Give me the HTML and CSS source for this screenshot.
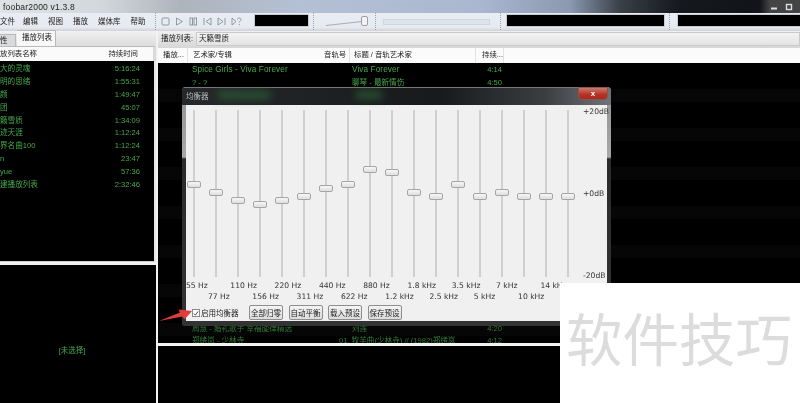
FILE: index.html
```html
<!DOCTYPE html>
<html lang="zh">
<head>
    <meta charset="UTF-8">
    <title>foobar2000 v1.3.8</title>
    <link rel="stylesheet" href="styles.css">
</head>
<body>
<div class="app">
    <div class="titlebar">
        <span>foobar2000 v1.3.8</span>
        <div class="caption-btns">
            <svg width="8" height="8" viewBox="0 0 8 8"><path d="M1 5.5h6" stroke="#ddd" stroke-width="2"/></svg>
            <svg width="8" height="8" viewBox="0 0 8 8"><rect x="1.5" y="1.5" width="5" height="5" fill="none" stroke="#ddd" stroke-width="1.4"/></svg>
        </div>
    </div>

    <div class="toolbar">
        <nav class="menu">
            <span>文件</span>
            <span>编辑</span>
            <span>视图</span>
            <span>播放</span>
            <span>媒体库</span>
            <span>帮助</span>
        </nav>
        <div class="grip"></div>
        <div class="transport">
            <svg width="9" height="9" viewBox="0 0 9 9"><rect x="1" y="1" width="7" height="7" rx="1"/></svg>
            <svg width="9" height="9" viewBox="0 0 9 9"><path d="M1.5 1l6 3.5-6 3.5z"/></svg>
            <svg width="9" height="9" viewBox="0 0 9 9"><rect x="1" y="1" width="2.6" height="7"/><rect x="5" y="1" width="2.6" height="7"/></svg>
            <svg width="9" height="9" viewBox="0 0 9 9"><path d="M1 1v7M8 1L3 4.5 8 8z"/></svg>
            <svg width="9" height="9" viewBox="0 0 9 9"><path d="M8 1v7M1 1l5 3.5L1 8z"/></svg>
            <svg width="11" height="9" viewBox="0 0 11 9"><path d="M1 1l4 3.5L1 8zM6.5 2.5c0-2 3.5-2 3.5 0 0 1.5-1.7 1.5-1.7 3M8.3 7v1.2"/></svg>
        </div>
        <div class="screen screen-time"></div>
        <div class="grip"></div>
        <div class="volume">
            <svg width="46" height="10" viewBox="0 0 46 10"><path d="M0 8.5L36 4.5" stroke="#a9adb3" fill="none"/></svg>
            <i class="volume-knob"></i>
        </div>
        <div class="grip"></div>
        <div class="seek"></div>
        <div class="grip"></div>
        <div class="screen screen-track"></div>
        <div class="grip"></div>
        <div class="screen screen-last"></div>
    </div>

    <div class="workspace">
        <aside class="side">
            <div class="tabs">
                <span class="tab">性</span>
                <span class="tab tab-active">播放列表</span>
            </div>
            <div class="side-head">
                <span>放列表名称</span>
                <span>持续时间</span>
            </div>
            <ul class="playlists">
                <li><span>大的灵魂</span><span>5:16:24</span></li>
                <li><span>明的思绪</span><span>1:55:31</span></li>
                <li><span>颜</span><span>1:49:47</span></li>
                <li><span>团</span><span>45:07</span></li>
                <li><span>籁雪质</span><span>1:34:09</span></li>
                <li><span>迹天涯</span><span>1:12:24</span></li>
                <li><span>界名曲100</span><span>1:12:24</span></li>
                <li><span>n</span><span>23:47</span></li>
                <li><span>yue</span><span>57:36</span></li>
                <li><span>建播放列表</span><span>2:32:46</span></li>
            </ul>
            <div class="now-playing">[未选择]</div>
        </aside>

        <main class="content">
            <div class="playlist-bar">
                <span>播放列表:</span>
                <div class="combo">天籁雪质</div>
            </div>
            <div class="columns">
                <span class="col-state">播放...</span>
                <span class="col-artist">艺术家/专辑</span>
                <span class="col-no">音轨号</span>
                <span class="col-title">标题 / 音轨艺术家</span>
                <span class="col-len">持续...</span>
            </div>
            <div class="tracks">
                <div class="track track-latin"><span class="t-artist">Spice Girls - Viva Forever</span><span class="t-title">Viva Forever</span><span class="t-len">4:14</span></div>
                <div class="track"><span class="t-artist">? - ?</span><span class="t-title">聊琴 - 最新情伤</span><span class="t-len">4:50</span></div>
                <div class="track track-low"><span class="t-artist">周慧 - 婚礼歌手 幸福旋律精选</span><span class="t-title">刘莲</span><span class="t-len">4:20</span></div>
                <div class="track track-last"><span class="t-artist">郑绪岚 - 少林寺</span><span class="t-title t-title-wide">01. 牧羊曲(少林寺) // (1982)郑绪岚</span><span class="t-len">4:12</span></div>
            </div>
            <div class="bottom-panel"></div>
        </main>
    </div>

    <!-- equalizer window -->
    <section class="eq-window">
        <header class="eq-title">
            <span>均衡器</span>
            <i class="glass glass-a"></i>
            <i class="glass glass-b"></i>
            <button class="close">x</button>
        </header>
        <div class="eq-body">
            <div class="eq-sliders">
                <div class="band"><i style="top:71px"></i></div>
                <div class="band"><i style="top:79px"></i></div>
                <div class="band"><i style="top:87px"></i></div>
                <div class="band"><i style="top:91px"></i></div>
                <div class="band"><i style="top:87px"></i></div>
                <div class="band"><i style="top:83px"></i></div>
                <div class="band"><i style="top:75px"></i></div>
                <div class="band"><i style="top:71px"></i></div>
                <div class="band"><i style="top:56px"></i></div>
                <div class="band"><i style="top:59px"></i></div>
                <div class="band"><i style="top:79px"></i></div>
                <div class="band"><i style="top:83px"></i></div>
                <div class="band"><i style="top:71px"></i></div>
                <div class="band"><i style="top:83px"></i></div>
                <div class="band"><i style="top:79px"></i></div>
                <div class="band"><i style="top:83px"></i></div>
                <div class="band"><i style="top:83px"></i></div>
                <div class="band"><i style="top:83px"></i></div>
                <div class="scale"><span>+20dB</span><span>+0dB</span><span>-20dB</span></div>
            </div>
            <div class="freqs">
                <span>55 Hz</span><span>110 Hz</span><span>220 Hz</span><span>440 Hz</span><span>880 Hz</span><span>1.8 kHz</span><span>3.5 kHz</span><span>7 kHz</span><span>14 kHz</span>
            </div>
            <div class="freqs freqs-low">
                <span>77 Hz</span><span>156 Hz</span><span>311 Hz</span><span>622 Hz</span><span>1.2 kHz</span><span>2.5 kHz</span><span>5 kHz</span><span>10 kHz</span>
            </div>
            <div class="eq-actions">
                <label class="check"><i class="box"><svg width="7" height="7" viewBox="0 0 7 7"><path d="M1 3.5l1.8 2L6 1" fill="none" stroke="#445" stroke-width="1.1"/></svg></i>启用均衡器</label>
                <button class="btn">全部归零</button>
                <button class="btn">自动平衡</button>
                <button class="btn">载入预设</button>
                <button class="btn">保存预设</button>
            </div>
        </div>
    </section>

    <svg class="arrow" width="36" height="16" viewBox="0 0 36 16"><path d="M0 13L21 4.5 19.5 1.5 33 3 25.5 11.5 23.5 8.5z" fill="#e23c3c"/></svg>

    <div class="watermark">软件技巧</div>
</div>
</body>
</html>
```

FILE: styles.css
```css
* {
    box-sizing: border-box;
}

body {
    margin: 0;
    background: #000;
    font-family: "Liberation Sans", "Noto Sans CJK SC", sans-serif;
    font-size: 8px;
    color: #222;
}

/* the shot is a soft, rescaled jpeg */
.app {
    position: relative;
    width: 800px;
    height: 403px;
    overflow: hidden;
    filter: blur(0.3px);
}

/* title bar */
.titlebar {
    height: 13px;
    display: flex;
    align-items: center;
    justify-content: space-between;
    padding-left: 3px;
    font-size: 8.5px;
    letter-spacing: 0.2px;
    color: #222;
    background: linear-gradient(90deg, #dfe3e6 0, #d3d8dc 100px, #aeb4bc 180px, #b4c0d4 300px, #a9b8d0 480px, #8a99b0 570px, #3a4048 620px, #15181c 680px, #11151a 760px, #444 770px);
}

.caption-btns {
    display: flex;
    gap: 7px;
    padding-right: 7px;
}

/* toolbar */
.toolbar {
    height: 18px;
    display: flex;
    align-items: flex-start;
    background: linear-gradient(#e9edf3, #e6eaf1 80%, #cfd2d6);
}

.menu {
    width: 154px;
    display: flex;
    gap: 10px;
    padding-top: 3px;
    font-size: 7.5px;
    line-height: 11px;
}

.menu span:first-child {
    margin-right: -2px;
}

.grip {
    width: 2px;
    height: 17px;
    margin: 0 1px;
    border-left: 1px dotted #9aa3b2;
}

.transport {
    width: 89px;
    display: flex;
    gap: 5px;
    padding: 4px 0 0 3px;
}

.transport svg {
    fill: none;
    stroke: #80858c;
    stroke-width: 0.8;
}

.screen {
    height: 13px;
    margin-top: 1px;
    background: #000;
    border: 1px solid #c8ccd2;
}

.screen-time {
    width: 55px;
    margin-left: 7px;
    margin-right: 3px;
}

.screen-track {
    width: 159px;
    margin: 1px 3px;
}

.screen-last {
    flex: 1;
    margin-left: 5px;
    border-right: 0;
}

.volume {
    position: relative;
    width: 58px;
    padding: 4px 0 0 10px;
}

.volume-knob {
    position: absolute;
    left: 45px;
    top: 3px;
    width: 7px;
    height: 10px;
    border: 1px solid #9a9ea4;
    border-radius: 2px;
    background: #f3f4f6;
}

.seek {
    width: 107px;
    height: 6px;
    margin: 6px 9px 0 5px;
    background: #dfe4ec;
    border: 1px solid #cfd6e0;
}

/* panes */
.workspace {
    height: 372px;
    display: grid;
    grid-template-columns: 156px 1fr;
    column-gap: 2px;
    background: #f2f2f2;
}

.side {
    display: flex;
    flex-direction: column;
    min-width: 0;
}

.tabs {
    height: 15px;
    display: flex;
    align-items: flex-end;
    gap: 1px;
    background: linear-gradient(#f1f1f1, #dcdcdc);
    font-size: 7.5px;
}

.tab {
    width: 16px;
    height: 12px;
    line-height: 12px;
    background: #d9dadc;
    border: 1px solid #b9b9b9;
    border-left: 0;
    border-bottom: 0;
}

.tab-active {
    width: 39px;
    height: 16px;
    padding-left: 5px;
    line-height: 13px;
    background: #f7f7f7;
}

.side-head {
    height: 15px;
    display: flex;
    justify-content: space-between;
    padding-right: 15px;
    line-height: 13px;
    font-size: 7.4px;
    background: #fafafa;
    border-top: 1px solid #bbb;
    border-right: 3px solid #d8d8d8;
}

.playlists {
    height: 201px;
    margin: 0;
    padding: 2px 0 0;
    list-style: none;
    background: #000;
    color: #46a84c;
    border-right: 2px solid #e8e8e8;
    border-bottom: 1px solid #ccc;
}

.playlists li {
    height: 12.9px;
    display: flex;
    justify-content: space-between;
    padding-right: 14px;
    line-height: 12.9px;
    font-size: 7.6px;
}

.now-playing {
    flex: 1;
    margin-top: 3px;
    padding: 79px 12px 0 0;
    text-align: center;
    background: #000;
    color: #46a84c;
    font-size: 7.5px;
}

.content {
    display: flex;
    flex-direction: column;
    min-width: 0;
}

.playlist-bar {
    height: 17px;
    display: flex;
    align-items: flex-start;
    gap: 3px;
    padding: 1px 0 0 3px;
    line-height: 13px;
    font-size: 7.5px;
    background: linear-gradient(#f0f0f0, #d7d7d7);
}

.combo {
    flex: 1;
    height: 14px;
    line-height: 12px;
    padding-left: 2px;
    background: linear-gradient(#f3f3f3, #e4e4e4);
    border: 1px solid #c9c9c9;
}

.columns {
    height: 15px;
    display: flex;
    line-height: 14px;
    font-size: 7.4px;
    background: #fbfbfb;
}

.columns span {
    height: 15px;
    border-right: 1px solid #e2e2e2;
}

.col-state {
    width: 30px;
    padding-left: 5px;
}

.columns .col-artist {
    width: 130px;
    padding-left: 5px;
    border-right: 0;
}

.col-no {
    width: 32px;
    padding-left: 6px;
}

.col-title {
    width: 126px;
    padding-left: 4px;
}

.col-len {
    width: 28px;
    padding-left: 6px;
}

.tracks {
    height: 280px;
    display: flex;
    flex-direction: column;
    padding-top: 1px;
    overflow: hidden;
    color: #46a84c;
    font-size: 7.6px;
    background: repeating-linear-gradient(#000 0, #000 26px, #060606 26px, #060606 39px);
}

.track {
    height: 12.9px;
    flex: none;
    position: relative;
    line-height: 12.9px;
}

.track span {
    position: absolute;
    top: 0;
    white-space: nowrap;
}

.track-latin .t-artist,
.track-latin .t-title {
    font-size: 8.2px;
    letter-spacing: 0.1px;
}

.t-artist {
    left: 34px;
}

.t-title {
    left: 194px;
}

.track .t-title-wide {
    left: 181px;
}

.t-len {
    right: 298px;
}

.track-low {
    height: 12px;
    margin-top: auto;
    color: #317a37;
}

.track-last {
    height: 8.5px;
    color: #317a37;
}

.bottom-panel {
    flex: 1;
    margin-top: 3px;
    background: #000;
}

/* equalizer window */
.eq-window {
    position: absolute;
    left: 182px;
    top: 87px;
    width: 429px;
    height: 239px;
    padding: 0 4px 5px;
    border-radius: 4px 4px 2px 2px;
    background: linear-gradient(#8f9194 0, #a8a8a8 70px, #2b2b2b 72px, #333 100%);
    overflow: hidden;
}

.eq-title {
    position: relative;
    height: 18px;
    margin: 0 -4px;
    padding: 2px 0 0 4px;
    line-height: 13px;
    font-size: 7.5px;
    color: #bbb;
    border-top: 1px solid #777;
    background: linear-gradient(90deg, #26292b, #17191b 60%, #3c3f42 85%, #707478 100%);
}

.glass {
    position: absolute;
    top: 3px;
    height: 8px;
    background: #2f6a3a;
    filter: blur(4px);
    opacity: 0.7;
}

.glass-a {
    left: 36px;
    width: 52px;
}

.glass-b {
    left: 174px;
    width: 26px;
}

.close {
    position: absolute;
    right: 3px;
    top: -1px;
    width: 30px;
    height: 13px;
    padding: 0;
    border: 1px solid #8a5550;
    border-radius: 0 0 4px 4px;
    background: linear-gradient(#c97a70, #b83224 60%, #a52a1e);
    color: #fff;
    font: bold 8px/10px "Liberation Sans", sans-serif;
}

.eq-body {
    height: 216px;
    padding-top: 5px;
    background: #f0f0f0;
}

.eq-sliders {
    height: 167px;
    display: flex;
    gap: 8px;
    padding-left: 1px;
}

.band {
    position: relative;
    flex: none;
    width: 14px;
    height: 167px;
}

.band::before {
    content: "";
    position: absolute;
    left: 6px;
    top: 0;
    width: 2px;
    height: 100%;
    background: #cfcfcf;
}

.band i {
    position: absolute;
    left: 0;
    width: 14px;
    height: 7px;
    border: 1px solid #a5a5a5;
    border-radius: 2px;
    background: linear-gradient(#f7f7f7, #dedede);
}

.scale {
    flex: none;
    height: 173px;
    margin: -3.5px 0 0 0;
    display: flex;
    flex-direction: column;
    justify-content: space-between;
    font: 7.6px "DejaVu Sans", sans-serif;
    color: #333;
}

.freqs {
    display: flex;
    margin-top: 3px;
    height: 11px;
    font: 7.6px/11px "DejaVu Sans", sans-serif;
    color: #333;
    white-space: nowrap;
}

.freqs span {
    width: 44.3px;
    flex: none;
}

.freqs-low {
    margin-top: 0;
    padding-left: 22px;
}

.eq-actions {
    display: flex;
    align-items: center;
    margin-top: 3px;
    padding-left: 6px;
    font-size: 7.5px;
}

.check {
    width: 57px;
    display: flex;
    align-items: center;
    gap: 1px;
}

.box {
    width: 8px;
    height: 8px;
    display: flex;
    background: #fff;
    border: 1px solid #8a8a8a;
}

.btn {
    width: 34px;
    height: 15px;
    margin-right: 5.5px;
    padding: 0;
    font: 7.5px "Liberation Sans", "Noto Sans CJK SC", sans-serif;
    color: #222;
    background: linear-gradient(#f4f4f4, #dcdcdc);
    border: 1px solid #8e8e8e;
    border-radius: 2px;
}

.arrow {
    position: absolute;
    left: 159px;
    top: 308px;
}

/* white corner with the site mark */
.watermark {
    position: absolute;
    left: 560px;
    top: 283px;
    width: 240px;
    height: 120px;
    padding: 20px 0 0 6px;
    background: #fff;
    color: #dcdcdc;
    font-size: 56.5px;
    line-height: 78px;
    white-space: nowrap;
}
```
